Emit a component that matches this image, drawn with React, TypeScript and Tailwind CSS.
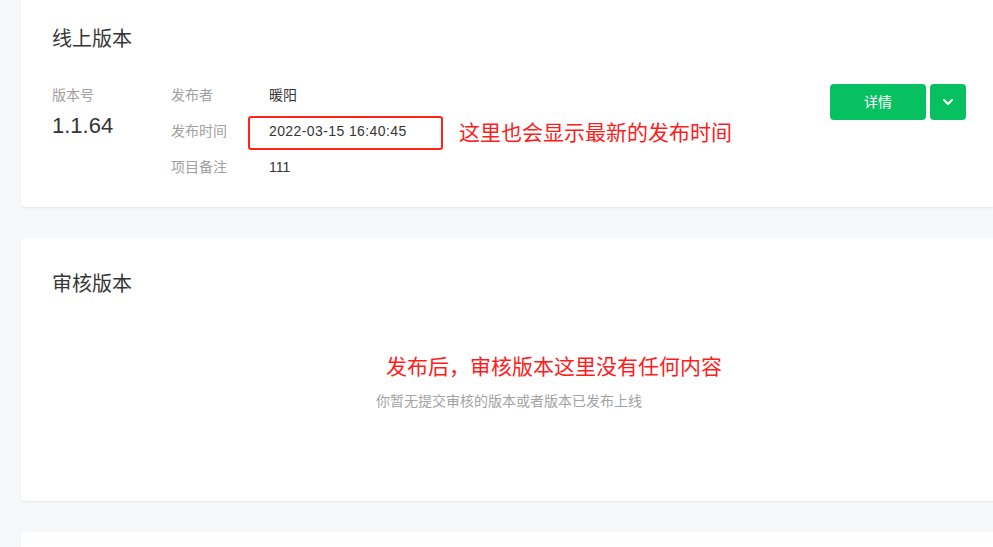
const font = "font-['Liberation_Sans','Noto_Sans_CJK_SC',sans-serif]";

function InfoRow({ label, children }: { label: string; children: React.ReactNode }) {
  return (
    <div className="flex h-5 items-center">
      <div className="w-[98px] text-[14px] text-[#a0a0a0]">{label}</div>
      <div className="relative text-[14px] text-[#353535]">{children}</div>
    </div>
  );
}

export default function App() {
  return (
    <div className={`${font} h-[547px] w-full overflow-hidden bg-[#f7f8fa]`}>
      <div className="-mt-[7px] flex flex-col gap-[31px] pl-[21px]">
        {/* online version */}
        <div className="w-[974px] rounded bg-white pb-[30px] pl-[31px] pr-[29px] pt-[32px] shadow-[0_1px_2px_rgba(0,0,0,0.08)]">
          <h2 className="text-[20px] leading-7 text-[#353535]">线上版本</h2>
          <div className="mt-[32px] flex items-start justify-between">
            <div className="flex">
              <div className="w-[119px]">
                <div className="h-5 text-[14px] leading-5 text-[#a0a0a0]">版本号</div>
                <div className="mt-[6px] text-[22px] leading-[30px] text-[#353535]">1.1.64</div>
              </div>
              <div className="flex flex-col gap-4">
                <InfoRow label="发布者">暖阳</InfoRow>
                <InfoRow label="发布时间">
                  <span className="whitespace-nowrap tracking-[0.4px]">2022-03-15 16:40:45</span>
                  <div className="absolute -left-[21px] -top-[5px] h-[34px] w-[195px] rounded-[3px] border-2 border-[#ff2418]" />
                  <div className="absolute left-[190px] -top-[2px] whitespace-nowrap text-[21px] leading-7 text-[#ff1c1c]">
                    这里也会显示最新的发布时间
                  </div>
                </InfoRow>
                <InfoRow label="项目备注">111</InfoRow>
              </div>
            </div>
            <div className="-mt-[1px] flex gap-1">
              <button className="h-9 w-24 rounded bg-[#07c160] text-[14px] text-white">详情</button>
              <button className="flex h-9 w-9 items-center justify-center rounded bg-[#07c160]">
                <svg width="12" height="8" viewBox="0 0 12 8" fill="none">
                  <polyline points="2,2 6,6 10,2" stroke="white" strokeWidth="2" strokeLinecap="round" strokeLinejoin="round" />
                </svg>
              </button>
            </div>
          </div>
        </div>

        {/* review version */}
        <div className="w-[974px] rounded bg-white pb-[90px] pl-[31px] pr-[29px] pt-[32px] shadow-[0_1px_2px_rgba(0,0,0,0.08)]">
          <h2 className="text-[20px] leading-7 text-[#353535]">审核版本</h2>
          <div className="mt-[55px] flex flex-col items-center">
            <div className="pl-[90px] text-[21px] leading-7 text-[#ff1c1c]">发布后，审核版本这里没有任何内容</div>
            <div className="mt-[10px] text-[14px] leading-5 text-[#a3a3a3]">你暂无提交审核的版本或者版本已发布上线</div>
          </div>
        </div>

        <div className="h-[100px] w-[974px] rounded bg-white shadow-[0_1px_2px_rgba(0,0,0,0.08)]" />
      </div>
    </div>
  );
}
